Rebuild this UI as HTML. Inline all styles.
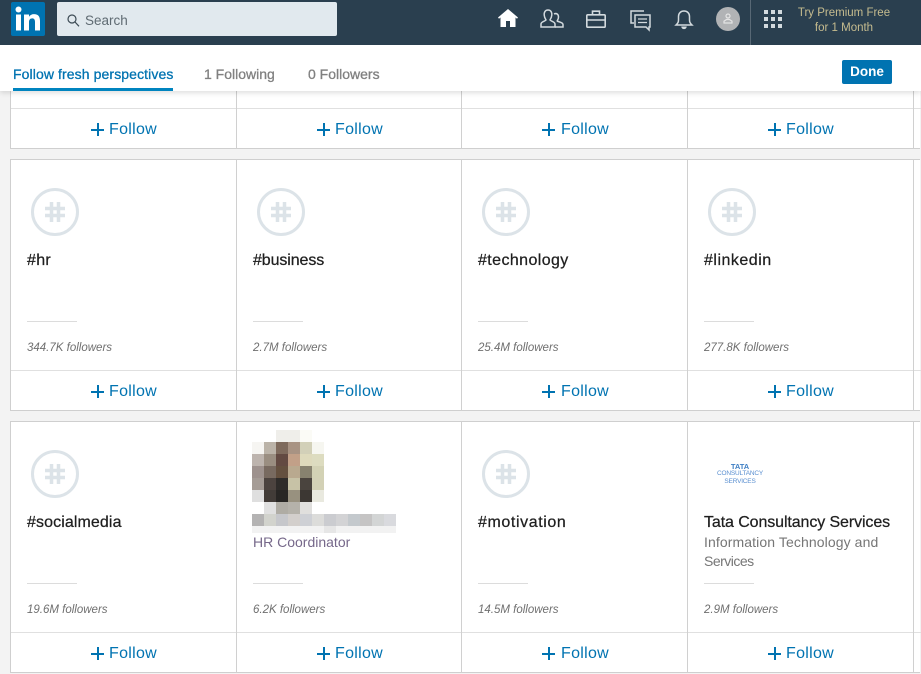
<!DOCTYPE html>
<html><head><meta charset="utf-8"><style>
html,body{margin:0;padding:0;width:921px;height:674px;overflow:hidden;background:#f3f3f3;font-family:"Liberation Sans",sans-serif}
div,span{position:absolute;white-space:nowrap}
svg{position:absolute;overflow:visible}
.nav{left:0;top:0;width:921px;height:45px;background:#2a3f4f}
.sub{left:0;top:45px;width:921px;height:46px;background:#fff;box-shadow:0 2px 5px rgba(0,0,0,.13)}
.top{left:0;top:0;width:921px;height:91px;z-index:5}
.row{left:10px;width:910px;background:#fff;border:1px solid #cfcfcf;border-width:1px 0 1px 1px;box-sizing:border-box}
.v{width:1px;background:#d0d0d0}
.h{left:11px;width:910px;height:1px;background:#e0e0e0}
.fl{font-size:16px;line-height:20px;color:#0073b1;height:20px;letter-spacing:.3px}
.pl{width:13px;height:13px}
.pl:before{content:"";position:absolute;left:0;top:5.5px;width:13px;height:2px;background:#0073b1}
.pl:after{content:"";position:absolute;left:5.5px;top:0;width:2px;height:13px;background:#0073b1}
.t{font-size:16px;line-height:20px;color:#1f1f1f;-webkit-text-stroke:.25px #1f1f1f}
.sep{width:50px;height:1px;background:#dcdcdc}
.c{font-size:11.5px;line-height:16px;font-style:italic;color:#6f6f6f}
.s{font-size:14px;line-height:19px;color:#767676}
.hc{width:48px;height:48px}
.tab{font-size:14px;line-height:18px;color:#808080;top:65px;-webkit-text-stroke:.3px #808080}
</style></head><body>

<div class="row" style="top:80px;height:69px"></div>
<div class="row" style="top:159px;height:252px"></div>
<div class="row" style="top:421px;height:252px"></div>
<div class="h" style="top:108px"></div><div class="h" style="top:370px"></div><div class="h" style="top:632px"></div>

<div class="v" style="left:236px;top:91px;height:58px"></div><div class="v" style="left:461px;top:91px;height:58px"></div><div class="v" style="left:687px;top:91px;height:58px"></div><div class="v" style="left:913px;top:91px;height:58px"></div>
<div class="v" style="left:236px;top:159px;height:252px"></div><div class="v" style="left:461px;top:159px;height:252px"></div><div class="v" style="left:687px;top:159px;height:252px"></div><div class="v" style="left:913px;top:159px;height:252px"></div>
<div class="v" style="left:236px;top:421px;height:252px"></div><div class="v" style="left:461px;top:421px;height:252px"></div><div class="v" style="left:687px;top:421px;height:252px"></div><div class="v" style="left:913px;top:421px;height:252px"></div>

<div class="top">
<div class="sub"></div>
<div class="nav"></div>
<div style="left:11px;top:2px;width:34px;height:34px;background:#0073b1;border-radius:2px"></div>
<svg style="left:11px;top:2px" width="34" height="34"><circle cx="7.5" cy="7.5" r="3" fill="#fff"/><rect x="5" y="12.5" width="5" height="16" fill="#fff"/><path d="M13 12.500h5v2.300c1-1.700 2.800-2.700 5-2.700 4.300 0 6 2.500 6 6.900v9.500h-5v-8.500c0-2.300-.8-3.600-2.800-3.600-2 0-3.200 1.400-3.200 3.600v8.500h-5z" fill="#fff"/></svg>
<div style="left:57px;top:2px;width:280px;height:34px;background:#e1e9ee;border-radius:2px"></div>
<svg style="left:67px;top:14px" width="13" height="13" fill="none" stroke="#3b4a54" stroke-width="1.200"><circle cx="5" cy="5" r="4"/><path d="M8 8l4 4.300"/></svg>
<div style="left:85px;top:12px;font-size:13.500px;line-height:18px;color:#5f6b73">Search</div>
<svg style="left:498px;top:9px" width="20" height="18"><path d="M10 0L20 8.500l-1 1.200-1.500-1.200V18H12v-6H8v6H2.500V8.500L1 9.700 0 8.500z" fill="#fff"/></svg>
<svg style="left:540px;top:9px" width="24" height="20" fill="none" stroke="#d3dade" stroke-width="1.500"><path d="M8 1c3 0 4 2.500 3.800 5-.2 2.500-1.300 4-1.800 5 .4 1 5 1.500 5 4v3H1v-3c0-2.500 4.600-3 5-4-.5-1-1.600-2.500-1.800-5C4 3.500 5 1 8 1z"/><path d="M14 5c2.500-1.200 4.500.3 4.500 3 0 2-1 3-1.300 4 .4.800 5.800 1 5.800 3.500V18h-8"/></svg>
<svg style="left:586px;top:10px" width="20" height="18" fill="none" stroke="#d3dade" stroke-width="1.600"><rect x=".8" y="4.800" width="18.400" height="12.400" rx="1"/><path d="M6.500 4.500V1.200h7v3.300M1 10h18"/></svg>
<svg style="left:630px;top:10px" width="21" height="20" fill="none" stroke="#d3dade" stroke-width="1.500"><path d="M14 1H1v12h3"/><path d="M5 5h15v12h-1v3l-3-3H5z"/><path d="M8 9h9M8 12.500h9" stroke-width="1.300"/></svg>
<svg style="left:675px;top:10px" width="18" height="19" fill="none" stroke="#d3dade" stroke-width="1.500"><path d="M1 15c1.500-1.500 2.500-2.500 2.500-5V6.500C3.500 3 6 1 9 1s5.500 2 5.500 5.500V10c0 2.500 1 3.500 2.500 5z"/><path d="M7 16.500c0 2.500 4 2.500 4 0" fill="#d3dade"/></svg>
<div style="left:716px;top:7px;width:24px;height:24px;border-radius:50%;background:#b1b3b5"></div>
<svg style="left:723px;top:13px" width="10" height="11" fill="none" stroke="#e4e4e4" stroke-width="1.200"><circle cx="5" cy="3" r="2"/><path d="M1 10V8.200L3.500 6.500h3L9 8.200V10z"/></svg>
<div style="left:750px;top:0;width:1px;height:45px;background:#586875"></div>
<svg style="left:764px;top:10px" width="18" height="18" fill="#d3dade"><rect x="0" y="0" width="4" height="4"/><rect x="7" y="0" width="4" height="4"/><rect x="14" y="0" width="4" height="4"/><rect x="0" y="7" width="4" height="4"/><rect x="7" y="7" width="4" height="4"/><rect x="14" y="7" width="4" height="4"/><rect x="0" y="14" width="4" height="4"/><rect x="7" y="14" width="4" height="4"/><rect x="14" y="14" width="4" height="4"/></svg>
<div style="left:784px;top:6px;width:120px;text-align:center;font-size:11.500px;line-height:15px;color:#c6bc8f">Try Premium Free</div>
<div style="left:784px;top:21px;width:120px;text-align:center;font-size:11.500px;line-height:15px;color:#c6bc8f">for 1 Month</div>

<div class="tab" style="left:13px;color:#0073b1;-webkit-text-stroke:.3px #0073b1;letter-spacing:.1px">Follow fresh perspectives</div>
<div style="left:13px;top:88px;width:160px;height:3px;background:#0084bf"></div>
<div class="tab" style="left:204px">1 Following</div>
<div class="tab" style="left:308px">0 Followers</div>
<div style="left:842px;top:60px;width:50px;height:24px;background:#0073b1;border-radius:2px;color:#fff;font-size:13.500px;font-weight:bold;line-height:24px;text-align:center">Done</div>
</div>

<div class="pl" style="left:91px;top:123px"></div><div class="fl" style="left:109px;top:120px">Follow</div>
<div class="pl" style="left:317px;top:123px"></div><div class="fl" style="left:335px;top:120px">Follow</div>
<div class="pl" style="left:542px;top:123px"></div><div class="fl" style="left:561px;top:120px">Follow</div>
<div class="pl" style="left:768px;top:123px"></div><div class="fl" style="left:786px;top:120px">Follow</div>
<div class="pl" style="left:91px;top:385px"></div><div class="fl" style="left:109px;top:382px">Follow</div>
<div class="pl" style="left:317px;top:385px"></div><div class="fl" style="left:335px;top:382px">Follow</div>
<div class="pl" style="left:542px;top:385px"></div><div class="fl" style="left:561px;top:382px">Follow</div>
<div class="pl" style="left:768px;top:385px"></div><div class="fl" style="left:786px;top:382px">Follow</div>
<div class="pl" style="left:91px;top:647px"></div><div class="fl" style="left:109px;top:644px">Follow</div>
<div class="pl" style="left:317px;top:647px"></div><div class="fl" style="left:335px;top:644px">Follow</div>
<div class="pl" style="left:542px;top:647px"></div><div class="fl" style="left:561px;top:644px">Follow</div>
<div class="pl" style="left:768px;top:647px"></div><div class="fl" style="left:786px;top:644px">Follow</div>

<svg class="hc" style="left:31px;top:188px" viewBox="0 0 48 48"><circle cx="24" cy="24" r="22.500" fill="#fff" stroke="#dce3e8" stroke-width="3"/><path d="M20.500 14v20M27.500 14v20M14 20.500h20M14 27.500h20" stroke="#dce3e8" stroke-width="3.500" fill="none"/></svg>
<svg class="hc" style="left:257px;top:188px" viewBox="0 0 48 48"><circle cx="24" cy="24" r="22.500" fill="#fff" stroke="#dce3e8" stroke-width="3"/><path d="M20.500 14v20M27.500 14v20M14 20.500h20M14 27.500h20" stroke="#dce3e8" stroke-width="3.500" fill="none"/></svg>
<svg class="hc" style="left:482px;top:188px" viewBox="0 0 48 48"><circle cx="24" cy="24" r="22.500" fill="#fff" stroke="#dce3e8" stroke-width="3"/><path d="M20.500 14v20M27.500 14v20M14 20.500h20M14 27.500h20" stroke="#dce3e8" stroke-width="3.500" fill="none"/></svg>
<svg class="hc" style="left:708px;top:188px" viewBox="0 0 48 48"><circle cx="24" cy="24" r="22.500" fill="#fff" stroke="#dce3e8" stroke-width="3"/><path d="M20.500 14v20M27.500 14v20M14 20.500h20M14 27.500h20" stroke="#dce3e8" stroke-width="3.500" fill="none"/></svg>
<svg class="hc" style="left:31px;top:450px" viewBox="0 0 48 48"><circle cx="24" cy="24" r="22.500" fill="#fff" stroke="#dce3e8" stroke-width="3"/><path d="M20.500 14v20M27.500 14v20M14 20.500h20M14 27.500h20" stroke="#dce3e8" stroke-width="3.500" fill="none"/></svg>
<svg class="hc" style="left:482px;top:450px" viewBox="0 0 48 48"><circle cx="24" cy="24" r="22.500" fill="#fff" stroke="#dce3e8" stroke-width="3"/><path d="M20.500 14v20M27.500 14v20M14 20.500h20M14 27.500h20" stroke="#dce3e8" stroke-width="3.500" fill="none"/></svg>

<div class="t" style="left:27px;top:251px;letter-spacing:.3px">#hr</div>
<div class="t" style="left:253px;top:251px;letter-spacing:-.1px">#business</div>
<div class="t" style="left:478px;top:251px;letter-spacing:.4px">#technology</div>
<div class="t" style="left:704px;top:251px;letter-spacing:.5px">#linkedin</div>
<div class="t" style="left:27px;top:513px;letter-spacing:.1px">#socialmedia</div>
<div class="t" style="left:478px;top:513px;letter-spacing:.6px">#motivation</div>
<div class="t" style="left:704px;top:513px;letter-spacing:-.1px">Tata Consultancy Services</div>

<div class="sep" style="left:27px;top:321px"></div><div class="sep" style="left:253px;top:321px"></div><div class="sep" style="left:478px;top:321px"></div><div class="sep" style="left:704px;top:321px"></div>
<div class="sep" style="left:27px;top:583px"></div><div class="sep" style="left:253px;top:583px"></div><div class="sep" style="left:478px;top:583px"></div><div class="sep" style="left:704px;top:583px"></div>

<div class="c" style="left:27px;top:340px">344.7K followers</div>
<div class="c" style="left:253px;top:340px">2.7M followers</div>
<div class="c" style="left:478px;top:340px">25.4M followers</div>
<div class="c" style="left:704px;top:340px">277.8K followers</div>
<div class="c" style="left:27px;top:602px">19.6M followers</div>
<div class="c" style="left:253px;top:602px">6.2K followers</div>
<div class="c" style="left:478px;top:602px">14.5M followers</div>
<div class="c" style="left:704px;top:602px">2.9M followers</div>

<div class="s" style="left:253px;top:533px;color:#76688a">HR Coordinator</div>
<div class="s" style="left:704px;top:533px;letter-spacing:.1px">Information Technology and</div>
<div class="s" style="left:704px;top:552px;letter-spacing:-.5px">Services</div>

<div style="left:717px;top:463px;width:46px;font-size:7.500px;line-height:8px;text-align:center;color:#3f7fc4;font-weight:bold">TATA</div>
<div style="left:717px;top:470px;width:46px;font-size:6.500px;line-height:8px;text-align:center;color:#5a8fd0;letter-spacing:-.2px">CONSULTANCY</div>
<div style="left:717px;top:477.500px;width:46px;font-size:6.500px;line-height:8px;text-align:center;color:#5a8fd0;letter-spacing:-.2px">SERVICES</div>

<svg style="left:252px;top:430px" width="144" height="103" shape-rendering="crispEdges">
<rect x="24" y="0" width="24" height="12" fill="#efeeea"/><rect x="48" y="0" width="12" height="12" fill="#fbfbf6"/>
<rect x="0" y="12" width="12" height="12" fill="#f6f5f2"/><rect x="12" y="12" width="12" height="12" fill="#bbb3a8"/><rect x="24" y="12" width="12" height="12" fill="#7e6a5c"/><rect x="36" y="12" width="12" height="12" fill="#a89383"/><rect x="48" y="12" width="12" height="12" fill="#d2d0b8"/><rect x="60" y="12" width="12" height="12" fill="#f6f6f0"/>
<rect x="0" y="24" width="12" height="12" fill="#bdb4ae"/><rect x="12" y="24" width="12" height="12" fill="#9a8e81"/><rect x="24" y="24" width="12" height="12" fill="#634a42"/><rect x="36" y="24" width="12" height="12" fill="#c2a088"/><rect x="48" y="24" width="12" height="12" fill="#dedabc"/><rect x="60" y="24" width="12" height="12" fill="#dddcc0"/>
<rect x="0" y="36" width="12" height="12" fill="#9e928e"/><rect x="12" y="36" width="12" height="12" fill="#786a60"/><rect x="24" y="36" width="12" height="12" fill="#64503f"/><rect x="36" y="36" width="12" height="12" fill="#b9a98f"/><rect x="48" y="36" width="12" height="12" fill="#87826f"/><rect x="60" y="36" width="12" height="12" fill="#d3d2b5"/>
<rect x="0" y="48" width="12" height="12" fill="#a59c96"/><rect x="12" y="48" width="12" height="12" fill="#4c433f"/><rect x="24" y="48" width="12" height="12" fill="#2f2c2a"/><rect x="36" y="48" width="12" height="12" fill="#c7c2a6"/><rect x="48" y="48" width="12" height="12" fill="#4a443e"/><rect x="60" y="48" width="12" height="12" fill="#d3d1b6"/>
<rect x="0" y="60" width="12" height="12" fill="#dfdfdf"/><rect x="12" y="60" width="12" height="12" fill="#423c38"/><rect x="24" y="60" width="12" height="12" fill="#282624"/><rect x="36" y="60" width="12" height="12" fill="#98917f"/><rect x="48" y="60" width="12" height="12" fill="#3c3733"/><rect x="60" y="60" width="12" height="12" fill="#e9e9df"/>
<rect x="12" y="72" width="12" height="12" fill="#e0e0e0"/><rect x="24" y="72" width="12" height="12" fill="#afaca4"/><rect x="36" y="72" width="12" height="12" fill="#b5b2aa"/><rect x="48" y="72" width="12" height="12" fill="#e0dfdd"/>
<rect x="0" y="84" width="12" height="12" fill="#b4b3b3"/><rect x="12" y="84" width="12" height="12" fill="#d2d3cd"/><rect x="24" y="84" width="12" height="12" fill="#c6c7cb"/><rect x="36" y="84" width="12" height="12" fill="#d3cfcc"/><rect x="48" y="84" width="12" height="12" fill="#ced0d5"/><rect x="60" y="84" width="12" height="12" fill="#dcdcda"/><rect x="72" y="84" width="12" height="12" fill="#cbccd0"/><rect x="84" y="84" width="12" height="12" fill="#d3d3d5"/><rect x="96" y="84" width="12" height="12" fill="#c4c9cd"/><rect x="108" y="84" width="12" height="12" fill="#c5c4c4"/><rect x="120" y="84" width="12" height="12" fill="#d3d5d5"/><rect x="132" y="84" width="12" height="12" fill="#d9dade"/>
<rect x="0" y="96" width="144" height="7" fill="#f2f2f2"/><rect x="72" y="96" width="12" height="7" fill="#e6e6e6"/>
</svg>
</body></html>
